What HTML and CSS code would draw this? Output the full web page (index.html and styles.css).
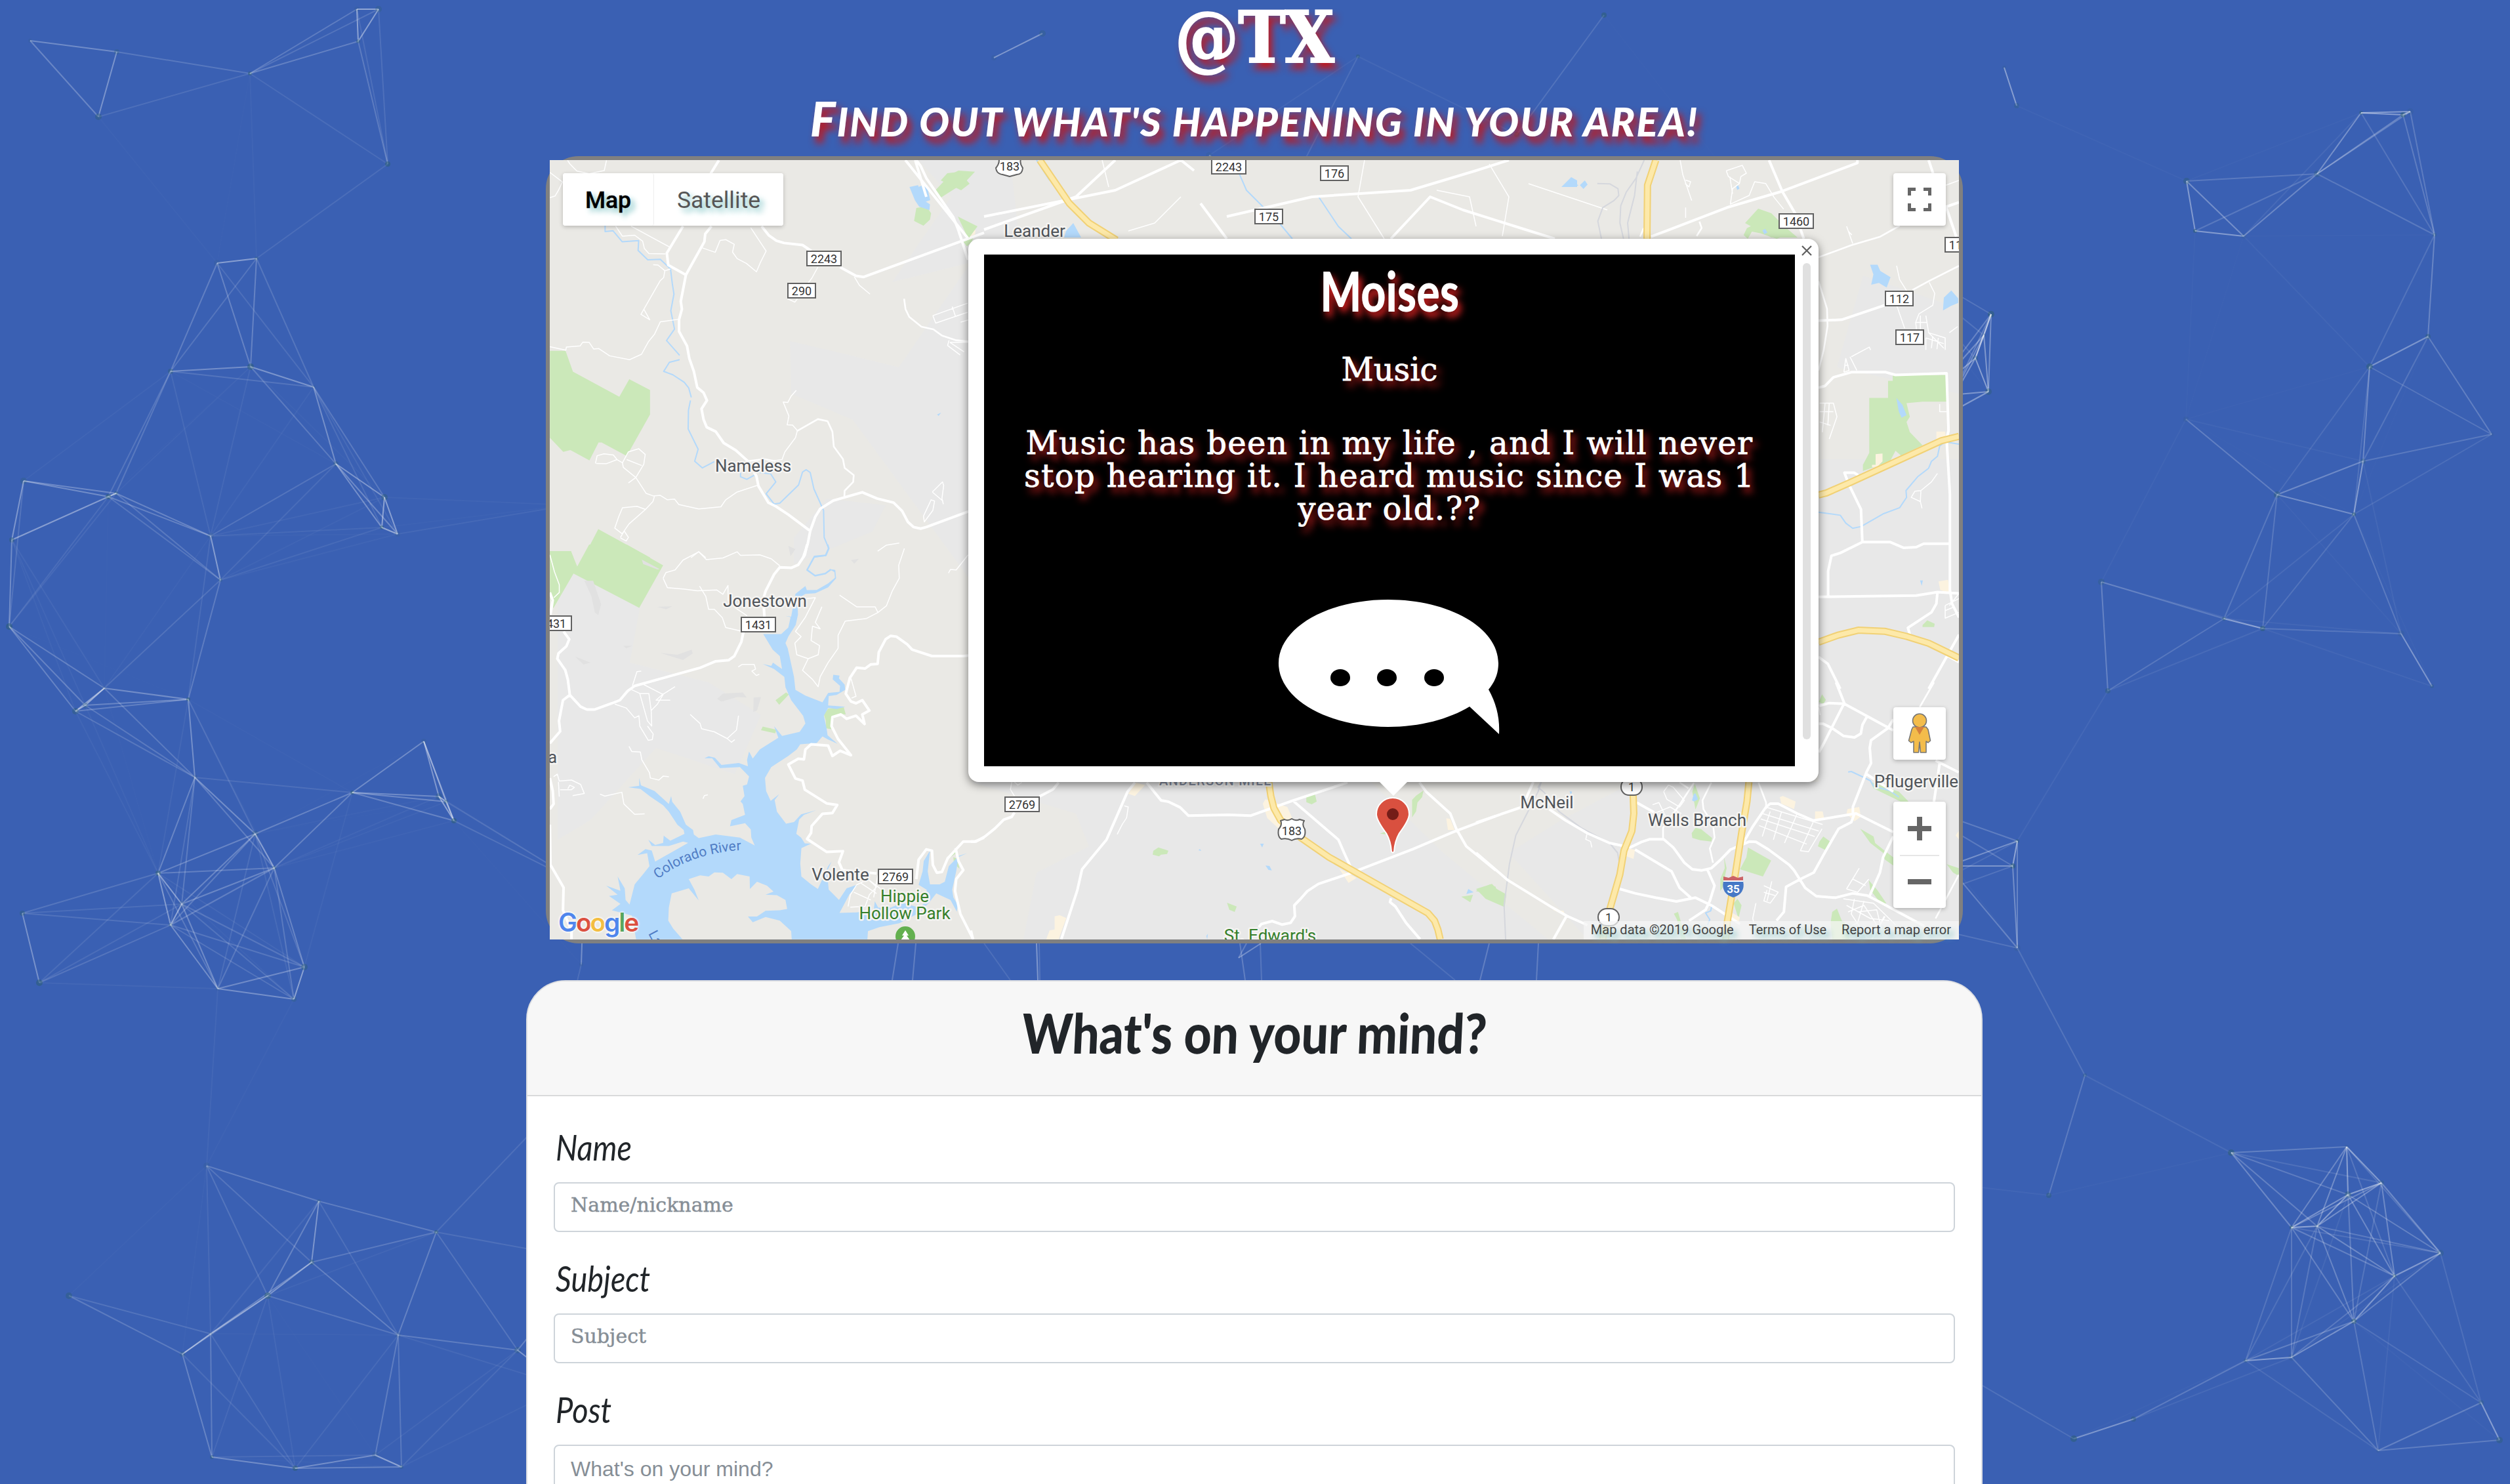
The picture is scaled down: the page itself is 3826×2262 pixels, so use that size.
FILE: index.html
```html
<!DOCTYPE html>
<html lang="en">
<head>
<meta charset="utf-8">
<title>@TX</title>
<link rel="stylesheet" href="styles.css">
</head>
<body>
<svg class="particles" id="particles" width="3826" height="2262" aria-hidden="true"></svg>
<main class="page">
  <header class="hero">
    <h1 class="brand">@TX</h1>
    <p class="tagline"><span class="tagline-text">Find out what's happening in your area!</span></p>
  </header>

  <section class="map">
    <svg class="map-tiles" viewBox="838 244 2148 1188" width="2148" height="1188">
      <rect class="land" x="838" y="244" width="2148" height="1188"/>
      <path class="urban" d="M1400 244H1540L1560 420V900L1476 880 1300 640 1206 600 1204 520 1290 540 1370 560 1480 400 1360 430 1450 300Z M1480 1192H2090L2200 1300 2360 1432H1560L1580 1330 1660 1290 1640 1240Z M2490 1192H2986V1432H2420L2300 1300 2380 1250Z M2772 700H2986V1192H2772Z M2840 420L2986 470V600L2800 560Z"/>
      <path class="urban" d="M1210 820L1260 760 1350 770 1330 810 1210 860Z M900 870L980 900 960 1010 1080 1040 1160 1090 1120 1180 1000 1140 900 1250 850 1280V880Z M1000 640H1010Z"/>
      <!-- north-west quarter -->
      <g transform="translate(820 230) scale(.43367 .39541)">
        <path class="park" d="M42 771H97L123 851 286 948 321 880 394 922V1016L312 1176 224 1124H213L181 1193 114 1153 89 1160 42 1106Z M212 1458L160 1568H395Z M42 1543H116L125 1568H42Z M1397 152L1448 92 1478 76 1536 80 1502 120 1416 180Z M1330 220L1365 214 1382 240 1378 265 1355 288 1322 270Z M1495 350L1530 335 1525 350 1508 368Z"/>
        <path class="shop" d="M1508 318L1517 296 1538 306 1536 322 1518 332Z"/>
        <path class="lake" d="M1306 139L1336 132 1356 190 1378 206 1376 228 1340 215 1325 190Z M1403 1016L1417 1009 1408 1022Z"/>
        <path class="stream" d="M236 288V311L264 308 296 350 354 346 352 384 386 420 430 418 466 455 472 510 478 552 467 616 480 687 452 731 498 788M498 805L462 815 442 850 474 863 514 892 530 914 539 950M536 962L529 1000 528 1072 563 1150 551 1196 578 1222 620 1198M712 1240V1256L734 1266 760 1250M780 1240L818 1245 836 1276 802 1322 830 1361 850 1358 916 1288 930 1238 943 1229 957 1240 970 1303 1004 1386 1006 1490 1022 1532 1010 1560 970 1566"/>
        <path class="lane" d="M104 36L112 50 137 78 180 88 233 76 241 36M42 83L86 120 72 152 60 174 42 180M273 290L297 329 340 325 368 348 374 376 390 396 448 397M327 290L462 370M578 374L623 391 640 345 660 342 690 360 684 390 700 415 733 434 768 466 782 430 802 386 748 296M405 439L422 440 446 462 442 488 430 500 362 630 393 651 372 610M466 455L446 462M495 649L430 659 410 706 388 736 364 784 322 805 252 790 214 762 196 764 180 738 158 737 148 752 100 756 98 768 42 755M42 1604M984 448L963 490 932 535M877 570L903 583 912 570M1112 485L1130 518 1167 552M908 923L890 945 878 970 862 968 882 1022 876 1056 895 1057 912 1078 905 1106 868 1160 858 1190 830 1194M202 1205L208 1175 232 1168 265 1172 278 1190 240 1206 205 1205M278 1190L297 1202 318 1160 354 1148 377 1170 372 1208 344 1259 318 1280M312 1190L365 1213M297 1202L300 1220 344 1259 380 1320 405 1330 430 1328 455 1345 480 1342 495 1363 565 1380 643 1372 660 1345 700 1315 770 1290M410 1330L404 1352 378 1382 348 1370 297 1376 284 1410 270 1454 296 1476 320 1438 378 1382M290 1490L303 1465 318 1490 310 1504 290 1492M1388 635L1510 587M1388 635L1398 664 1510 622M1456 600L1467 636M1486 660L1512 652M1445 730L1440 750 1484 787M1448 738L1498 775M1448 738H1512M1386 1315L1422 1276 1426 1290 1420 1340 1425 1362M1386 1315L1424 1350M1355 1408L1382 1345 1394 1350 1388 1386 1358 1430 1355 1408M1194 1543L1224 1520 1270 1512M538 1568L565 1545 590 1568"/>
        <path class="road" d="M1287 570L1292 610 1305 640 1348 678 1390 688 1420 712 1470 730 1512 734M910 1080L984 1034 1018 1042 1035 1082 1040 1140 1072 1188 1078 1222 1110 1250 1108 1276 1078 1310 1077 1332M740 1196L795 1188 835 1196"/>
        <path class="street" d="M636 36L607 88M510 290L453 394 458 440 520 478M610 290L588 320 585 350 520 478 502 580 506 610 496 650V696L524 752 532 800 548 850 560 912 582 932 594 962 575 994 582 1035 593 1065 625 1082 653 1126 695 1154 736 1194 768 1254 775 1292 810 1356 836 1370 880 1402 957 1465 948 1516 932 1568M957 1465L975 1410 992 1380 1038 1348 1140 1316 1192 1340 1250 1356 1280 1388 1300 1430 1320 1450 1345 1456 1365 1450 1513 1390M786 290L812 326 838 346 865 355 930 363 960 385M1062 448L1118 482 1145 486 1568 316M1330 36L1345 58 1365 105 1460 256 1476 300 1512 420"/>
      </g>
      <!-- south-west quarter: Lake Travis -->
      <g transform="translate(820 830) scale(.43367 .39541)">
        <path class="park" d="M180 0H312L440 80 356 244 125 112 54 246 42 200V25H116L138 85Z M835 600L872 570 882 578 848 618Z M784 716L790 702 838 714 834 728Z M1005 655L1020 632 1075 628 1082 655 1060 652 1040 665 1030 712 1012 708V680Z M1442 1200L1468 1175 1470 1190 1446 1208Z M1460 1205L1472 1210 1482 1250 1462 1230Z"/>
        <path class="shade" d="M365 58L428 95 420 96 370 75Z M163 140H194L222 230 212 272 200 262 188 200Z M430 418L490 425 540 405 544 420 510 445Z M630 595L650 575 720 570 734 590 700 588 645 606Z M758 590L784 588 770 640 757 645Z M420 240L472 238 450 250Z M300 390L332 390 310 400Z M130 432L185 455 160 462Z M880 5L905 18 888 45Z M1100 60L1128 55 1112 74Z"/>
        <path class="lake" d="M905 190L940 160 945 176 980 175 1020 150 1044 128 1042 106 1024 95 1045 98 1048 130 1020 165 975 188 940 190 912 210 914 270 906 310 880 355 870 380 878 400 886 440 900 510 905 560 940 582 1000 608 1020 572 1060 568 1062 545 1036 520 1038 502 1060 505 1058 516 1078 540 1080 560 1050 580 1022 584 1020 620 1080 625 1050 634 1020 630 1005 660 1015 712 1018 735 1053 768 1020 752 1000 740 980 765 922 770 910 790 880 815 820 858 798 900 802 950 818 988 848 962 832 985 840 1030 872 1076 900 1070 925 1040 978 1024 935 1042 918 1060 908 1115 925 1130 938 1152 960 1153 926 1170 922 1230 926 1280 960 1310 984 1328 1020 1240 1032 1222 1016 1260 1022 1330 1058 1370 1085 1325 1125 1310 1095 1348 1060 1420 1120 1418 1180 1410 1184 1375 1196 1400 1240 1400 1280 1380 1340 1400 1370 1370 1366 1330 1338 1312 1352 1260 1356 1220 1378 1180 1370 1260 1378 1310 1412 1310 1430 1300 1444 1240 1480 1200 1508 1190 1478 1205 1470 1260 1456 1330 1460 1360 1476 1390 1472 1415 1450 1370 1400 1345 1375 1380 1340 1420 1270 1460 1200 1475 1160 1490 1158 1522H892L890 1490 850 1450 800 1436 755 1456 738 1434 770 1434 800 1412 850 1410 876 1405 870 1370 840 1352 800 1350 828 1338 805 1315 770 1300 745 1328 744 1280 700 1270 680 1290 650 1265 620 1264 600 1280 570 1275 530 1290 550 1330 565 1372 530 1325 470 1345 460 1400 458 1450 475 1480 508 1522H345L330 1430 260 1410 290 1385 250 1355 280 1350 240 1315 290 1335 280 1280 305 1325 308 1370 322 1388 340 1310 370 1270 392 1240 384 1190 350 1197 378 1174 400 1180 412 1222 528 1150 510 1145 460 1162 400 1162 388 1138 412 1158 440 1150 442 1122 465 1142 515 1115 512 1100 490 1080 460 1030 440 1005 395 972 360 942 318 936 356 930V900L362 928 410 950 460 1000 468 970 472 992 500 1030 520 1080 545 1100 548 1118 565 1132 625 1118 710 1130 762 1160 750 1130 748 1098 728 1074 675 1086 680 1062 728 1042 720 1000 712 990 726 970 720 930 735 925 742 894 710 858 640 862 612 824 585 824 600 816 622 822 645 850 706 842 738 855 735 830 742 798 755 825 780 790 845 745 830 700 858 738 920 722 940 690 932 660 890 600 870 550 866 510 830 480 790 460 820 468 826 455 858 480 850 430 825 405 792 345 855 345 880 320 888 280 870 275 890 278Z"/>
        <path class="river" d="M1018 0L1022 15 1012 42 972 46 946 98 974 120 1010 112 1030 96"/>
        <path class="lane" d="M42 40L58 105 75 155V185L56 205M440 130L450 108 482 98 510 60 565 28 592 58 650 52 700 28 712 42 780 40 820 55 850 82M440 130L455 166 515 172 560 178 628 175 650 192 668 158V215L695 245 735 275M568 160L590 200 600 250 620 250 648 282 660 320 720 335M1060 195L1120 240 1185 240 1195 262 1225 236 1245 180 1270 130 1268 80 1288 15M1195 262L1155 285 1080 295 1055 350V400L1020 455 992 510 985 548 965 520 930 485 950 440 985 425 990 390 960 370 965 315 992 325 975 300 998 240M950 440L910 425 903 380 925 355 905 335 940 280 975 205 928 210M363 488L348 490 332 545M330 560L360 575H390L398 640 400 700 385 680 358 575M372 540L440 578 420 615 398 640M482 548L438 578 415 600 465 600M270 615L310 630 340 668 355 660 358 700 388 755 402 752 405 730 385 700M535 655L570 690 575 710 620 722 665 748 698 715 705 660M665 748L680 762 692 752M704 472L718 462H760L765 480 752 488 768 505 778 500M320 778L330 798 360 800 365 830 392 880 395 900 425 908 440 893 460 895M55 895L68 885 75 912 118 908 150 925 163 960 122 968M75 972L72 915M78 945L118 945 128 936 112 928 105 942M218 962L235 970 295 955 302 1000 340 1040 375 1038M580 980L585 968 597 965M1443 110L1450 96 1470 98 1512 40M1100 515L1118 585 1102 592M1090 1395L1098 1350 1120 1312 1160 1290 1190 1320 1165 1350 1150 1395 1098 1398M1110 1340L1170 1370M1135 1305L1190 1345M1160 1290L1220 1340M1195 1275L1180 1360"/>
        <path class="street" d="M946 0L938 40 915 78 890 90 850 88 830 115 800 180 792 210 796 278M722 338L715 375 690 430 670 446 625 450 570 475 340 545 315 565 288 600 260 612 200 636 172 636 150 625 112 580 105 520 96 484 68 440 72 420 100 392 110 365 90 335M42 185L52 215 44 270M112 580L88 600 74 680 78 720 42 766M42 900L52 950 55 1000 42 1020M42 1080L44 1235 90 1322 88 1410 118 1490V1522M1513 428L1495 430H1385L1315 405 1298 385 1260 355 1240 352 1222 365 1198 415 1194 460 1170 462 1150 478 1120 475 1096 515 1082 575 1100 605 1118 612 1140 600 1165 640 1140 655 1148 692 1118 660 1085 672 1065 655 1035 665 1032 700 1055 750 1100 812 1062 795 1035 815 1020 775 960 770 940 790 935 828 915 826 880 848 905 902 930 910 938 945 1015 998 1052 1004 1035 1035 1000 1038 962 1085 960 1112 946 1135 1015 1185 1072 1182 1058 1225 1070 1255 1190 1268M1330 1290L1338 1215 1365 1175 1385 1180 1388 1235 1402 1265 1420 1262 1440 1210 1495 1145 1535 1145 1568 1130M1468 1170L1478 1220 1495 1255 1470 1290 1466 1335 1485 1425 1530 1522"/>
      </g>
      <!-- northern strip above the popup -->
      <path class="park" d="M1434 275L1444 264 1462 262 1478 280 1465 290Z M2660 340L2680 318 2700 325 2720 345 2740 362H2700Z M1460 330L1490 345 1476 364Z"/>
      <path class="lake" d="M1400 285L1412 280 1418 305 1404 310Z M1625 352L1636 340 1648 362H1622Z M2380 285L2395 270 2404 275V285Z"/>
      <path class="stream" d="M1880 244L1900 290 1950 340 1970 364M2010 300L2040 345 2060 364M1580 244L1600 275"/>
      <path class="lane" d="M1680 244L1690 285M2080 244L2070 300 2110 364M2330 280L2450 320M1800 300L1760 340 1720 352M2270 250L2300 300 2290 360M2190 290L2240 300 2250 345"/>
      <path class="street" d="M1395 244L1412 300M1800 244L1820 260M1500 330L1700 290 1800 244M1500 350L1640 300 1700 244M1830 310L1870 364M1870 330L2000 300 2150 290 2250 260 2300 244M2120 364L2180 300 2230 320 2370 364M1380 244L1476 364"/>
      <path class="hwy-edge" d="M1585 244L1630 310 1660 340 1702 366"/><path class="hwy" d="M1585 244L1630 310 1660 340 1702 366"/>
      <!-- south, below the popup -->
      <g transform="translate(1480 1160) scale(.5102 .33333)">
        <path class="park" d="M545 410L560 395 590 410 586 425 568 428 562 436 543 428Z M765 648L794 665 788 690 772 680Z M1002 165L1028 153 1033 185 1018 198 1002 188Z M1318 178L1330 158 1352 135 1348 165 1334 190 1330 230 1318 258Z M1222 332L1240 322 1238 335Z M1465 620L1500 612 1492 646Z M1508 595L1550 565 1568 575V648L1540 605Z"/>
        <path class="shop" d="M470 150L492 98 520 110 490 160Z M872 195L880 175 945 210 960 260 920 310 885 260Z M1100 492L1130 515 1152 535 1128 557Z M1420 262L1432 265 1445 315 1425 315Z M225 815L235 775 250 770V710L265 705 285 718 262 815Z"/>
        <path class="lake" d="M864 378L875 378 870 395Z M880 478L892 480 899 500 889 498Z M1480 608L1486 585 1502 600Z M680 408L684 402 688 411Z M703 800L708 790 706 815Z"/>
        <path class="lane" d="M122 96L118 130 130 160M458 205L470 210 465 260 452 290 437 335M130 96L140 110 152 98"/>
        <path class="street" d="M262 98L245 130 205 162M130 235L122 255 98 268 72 308 42 345 15 368H0M490 98L468 140 405 360 332 495 318 590 270 815M525 98L568 180 590 186 625 212 650 250 770 246 835 250 960 182 1125 98M965 185L1098 360 1115 420 1136 490M860 760L868 745 900 732 930 748 955 740 968 710 966 660 985 630 1005 595 1038 562 1130 515 1320 403 1445 322 1568 252M1340 98L1360 140 1432 240 1450 310 1480 390 1568 500M1255 628L1252 645 1268 665 1300 740 1342 815M0 775L6 815"/>
        <path class="hwy-edge" d="M890 98L896 160 905 215 925 270 985 350 1070 440 1365 695 1385 730 1395 770 1402 815"/><path class="hwy" d="M890 98L896 160 905 215 925 270 985 350 1070 440 1365 695 1385 730 1395 770 1402 815"/>
      </g>
      <!-- south-east quarter -->
      <g transform="translate(2250 1040) scale(.48469 .33333)">
        <path class="park" d="M0 945L50 922 65 945 95 970 90 1028 30 990Z M680 500L688 465 704 530 690 582Z M678 690L690 665 708 672 742 712 740 728 705 722 680 712Z M855 755L928 815 902 888 830 855 850 800Z M1080 728L1092 705 1115 730 1100 768 1075 750Z M1088 55L1100 80 1092 100 1078 90Z M1208 670L1250 705 1255 735 1285 770 1312 800V838L1285 810 1280 780 1240 735Z M780 800L788 850 775 940 768 955V900L782 850Z M1235 905L1262 950 1290 1010 1275 1015 1240 950Z M1120 1050L1135 1035 1150 1090 1160 1100 1175 1176H1120L1115 1100Z M622 1058L635 1050 645 1100 660 1176H645L632 1085Z M1240 455L1290 480 1330 500 1360 545H1335L1250 485Z M810 1010L822 990 835 1020 825 1080Z M1480 832L1518 850V885L1500 870Z"/>
        <path class="shop" d="M955 525L965 520 1005 545 1000 580 960 555Z M1066 590L1090 590 1095 625 1066 628Z M1168 580L1205 570 1210 615 1190 635 1165 600Z M475 760L500 765 495 808 472 795Z M800 1050L830 1075 825 1100 805 1090Z M240 1040L275 1045 280 1065Z M1518 680L1508 700 1518 718Z"/>
        <path class="lake" d="M685 510L690 508 698 535 686 545 679 540Z M294 498L302 500 298 515Z"/>
        <path class="stream" d="M1170 410L1180 408 1215 432 1240 450 1250 475 1300 495 1330 525M742 1015L738 1045 722 1055 735 1085 728 1110"/>
        <path class="rail" d="M205 456L195 480 215 505 260 590 330 665 420 735 445 780 450 820M205 456L195 500 160 600 125 700 105 830 88 1020 93 1176"/>
        <path class="lane" d="M350 685L345 718 360 728 364 755M590 500L605 470 620 480 655 540 640 570 600 535 590 500M555 560L575 550 600 625M560 600L610 570 645 600M925 590L900 705M910 570L1090 650M900 600L1078 680M895 625L1065 705M890 655L1040 740M960 595L935 720M1010 600L970 735M1060 640L1020 770 1045 775 1088 670M905 930L950 960 925 1010 905 1000 915 950M930 910L915 1000M905 960L940 975M1165 945L1205 850M1165 945L1200 960 1235 900M1185 900L1225 930M1155 990L1250 1010 1320 1110M1165 1020L1240 1080 1300 1090M1170 1050L1220 1020 1260 1110 1200 1170M1190 990L1180 1060 1230 1170M1200 1050L1260 1040 1280 1160M1220 1000L1200 1100 1160 1130M880 1010L870 1080 875 1110M1078 115L1082 150"/>
        <path class="road" d="M685 460L640 560 588 665V715M740 458L712 540 715 580 745 650 750 710 735 760 745 825M640 458L668 485M888 458L912 550V580M1440 0L1395 114M1285 1070L1245 1176M1518 880L1445 1080"/>
        <path class="street" d="M180 456L145 570 0 642M230 580L280 630 350 690 420 735 485 755 520 730 545 718H590L620 755 655 825 680 855 710 860 740 850 770 810 800 765 860 728 880 730 920 765 985 835 1000 860 1035 940 1070 978 1130 985 1185 965 1230 975 1270 1005 1410 1115M505 550L560 595M500 765L615 865 640 940 675 985M0 780L100 905 240 1030 285 1068 350 1110M285 1068L243 1176M452 945L500 965 565 985 630 1002 690 985 740 1020 830 1105M728 858L750 930 735 1000 722 1040 670 1090M830 760L870 660 912 570 925 555 950 555 1010 600 1060 632 1195 600 1312 685M1190 600L1180 640 1140 670 1100 770 1062 870 1020 900 975 935 968 1050 945 1090M1132 0L1158 95 1095 275 1078 320M1078 108L1110 95 1158 98 1312 220M1078 190H1092L1120 210 1155 245 1190 252 1210 235 1215 195 1230 155M1312 170L1295 210 1242 265 1238 300 1242 370 1228 410 1185 570V600M1445 358L1518 412M1458 370L1440 546M1312 705L1280 800 1270 870 1238 975M1228 420L1312 500"/>
        <path class="hwy-edge" d="M494 515L496 600 490 680 465 770 452 880 420 1040 398 1176M858 456L852 545 835 690 815 880 790 1095 785 1176"/><path class="hwy" d="M494 515L496 600 490 680 465 770 452 880 420 1040 398 1176M858 456L852 545 835 690 815 880 790 1095 785 1176"/>
      </g>
      <!-- north-east quarter -->
      <g transform="translate(2380 230) scale(.42092 .52296)">
        <path class="park" d="M1200 654L1395 653V731H1308L1250 735 1262 775 1250 790 1262 820 1308 858 1230 888 1210 874 1190 905 1120 925 1092 933V915L1115 880V720H1183V670H1200Z M1308 1382L1325 1368 1352 1378 1350 1388H1308Z M660 245L672 225 705 212 720 200 735 215 775 245 800 250 780 256 720 240 690 235 675 256Z"/>
        <path class="shop" d="M1138 884L1163 882V905L1145 920 1125 922V915H1138Z M1358 818H1390L1393 840 1358 842Z M1366 1255L1400 1250 1410 1290 1372 1280Z"/>
        <path class="lake" d="M1118 332H1145L1155 350 1192 368 1178 398 1150 385 1122 390 1130 360Z M1382 465L1385 428 1412 407 1437 430V443L1410 452Z M1213 720L1235 740 1250 770 1232 778 1222 760Z M67 100L85 86 95 98 80 111Z M32 95L45 93 62 100 50 105 35 103Z M728 232L738 227 746 238 735 243Z M1299 1252H1309L1305 1268Z M633 104L640 100 645 110 637 114Z"/>
        <path class="stream" d="M931 1053L1010 1062 1030 1085 1055 1100 1085 1095 1165 1058 1225 1040 1250 1010 1248 990 1290 950 1330 925 1340 905 1362 890 1370 860 1390 848 1440 855"/>
        <path class="rail" d="M300 27L270 80 235 120 215 160 212 210 225 256M275 60L265 130 240 210 245 256M130 95L175 96 205 110 208 130 190 145 150 165 132 205 145 256"/>
        <path class="lane" d="M430 27L440 70 472 145M450 85L468 90 462 105 448 95M450 165V195M597 58L655 42 670 65 650 75 645 95 620 110 612 155 680 130 700 90 740 95 770 135 805 170M597 58L605 75 645 95M610 75L620 125M1033 220L1055 270M1040 235L1052 245M1214 335L1225 375 1252 410M1332 383L1352 415 1345 450 1295 475 1283 500 1290 545M1214 450L1243 517M1320 480L1330 530 1390 545 1390 580M1300 480V530M1285 500H1325M1320 545L1320 580M1320 545L1385 562M1330 530L1385 575M1345 540L1340 575M1365 545L1360 578M1050 600L1115 572 1120 580M1045 600L1070 640M1023 645L1030 605 1042 640 1023 645M1025 625H1040M935 735H985L998 775 970 840M935 760L985 760M935 790L975 800M955 735L945 820M970 735L965 800M1362 940L1340 965 1302 990 1280 992 1267 1010 1300 1022 1302 990M1300 1022L1306 1042M1370 738V760H1395M1390 1325L1440 1305M1390 1325V1362L1440 1345M1390 1340L1420 1330M1440 1290L1405 1325M1405 530L1435 512M1393 100L1440 86"/>
        <path class="road" d="M500 206L508 225 490 248M931 380L962 460 964 510 950 580 931 640M1272 405L1330 380 1440 335M931 310L1050 275 1155 250 1225 218M285 250L298 225"/>
        <path class="street" d="M325 250L600 165 798 118 1072 35V27M752 27L800 118 845 180 878 256M931 495L1015 492 1170 450M1330 27L1350 75M1393 163L1440 150M1393 163L1430 250M931 690L955 685 985 660 1050 645H1175L1210 653 1395 648 1402 815 1395 840 1407 1000V1280L1415 1320 1440 1360M1075 945L1060 938H1025L1040 970 1085 1045 1090 1140M966 1300V1225L978 1180 1010 1172 1090 1140H1190L1240 1157 1285 1155 1312 1145H1407M931 1300L1285 1296 1362 1286 1440 1290M1362 1286L1358 1320 1340 1345 1255 1390 1262 1410M1440 1410L1330 1568M931 1475L965 1495 1010 1568M1395 1470L1440 1490"/>
        <path class="hwy-edge" d="M342 27L312 100 310 256M931 1003L960 997 1050 965 1375 845 1440 832M931 1432L1000 1412 1075 1397 1170 1400 1250 1415 1330 1435 1440 1478"/><path class="hwy" d="M342 27L312 100 310 256M931 1003L960 997 1050 965 1375 845 1440 832M931 1432L1000 1412 1075 1397 1170 1400 1250 1415 1330 1435 1440 1478"/>
      </g>
      <!-- road shields -->
      <g class="shield">
        <rect x="1230" y="383" width="52" height="22"/><text x="1256" y="401">2243</text>
        <rect x="1201" y="432" width="42" height="22"/><text x="1222" y="450">290</text>
        <rect x="817" y="939" width="54" height="22"/><text x="843" y="957">1431</text>
        <rect x="1130" y="941" width="52" height="22"/><text x="1156" y="959">1431</text>
        <rect x="1339" y="1325" width="52" height="22"/><text x="1365" y="1343">2769</text>
        <rect x="1532" y="1215" width="52" height="22"/><text x="1558" y="1233">2769</text>
        <rect x="1847" y="243" width="52" height="22"/><text x="1873" y="261">2243</text>
        <rect x="2013" y="253" width="42" height="22"/><text x="2034" y="271">176</text>
        <rect x="1913" y="319" width="42" height="22"/><text x="1934" y="337">175</text>
        <rect x="2712" y="326" width="52" height="22"/><text x="2738" y="344">1460</text>
        <rect x="2965" y="362" width="42" height="22"/><text x="2986" y="380">118</text>
        <rect x="2874" y="444" width="42" height="22"/><text x="2895" y="462">112</text>
        <rect x="2890" y="503" width="42" height="22"/><text x="2911" y="521">117</text>
        <rect x="2471" y="1187" width="32" height="25" rx="12"/><text x="2487" y="1206">1</text>
        <rect x="2436" y="1385" width="32" height="26" rx="13"/><text x="2452" y="1405">1</text>
        <path d="M1952 1251L1958 1249Q1963 1252 1969 1248 1975 1252 1981 1249L1988 1251Q1984 1257 1989 1264 1991 1275 1984 1279 1976 1277 1969 1281 1962 1277 1953 1279 1947 1275 1949 1264 1955 1257 1952 1251Z"/><text x="1969" y="1273">183</text>
        <path d="M1522 240L1526 238H1552L1557 240Q1553 248 1559 256 1558 266 1550 266L1539 269 1528 266Q1519 265 1518 256 1525 248 1522 240Z"/><text x="1539" y="260">183</text>
      </g>
      <path fill="#4678c6" d="M2627 1343H2657Q2661 1362 2642 1368 2623 1362 2627 1343Z"/><path fill="#cb6266" d="M2627 1343V1336L2635 1338 2642 1335 2649 1338 2657 1336V1343Z"/><path stroke="#fff" stroke-width="2" d="M2627 1343H2657"/><text class="interstate" x="2642" y="1361">35</text>
      <!-- place names -->
      <g class="place">
        <text x="1577" y="361">Leander</text><text x="1148" y="719">Nameless</text><text x="1166" y="925">Jonestown</text>
        <text x="1281" y="1342">Volente</text><text x="2358" y="1232">McNeil</text><text x="2587" y="1259">Wells Branch</text><text x="2921" y="1200">Pflugerville</text><text x="842" y="1163">a</text>
      </g>
      <g class="place place-park"><text x="1379" y="1375">Hippie</text><text x="1379" y="1401">Hollow Park</text><text x="1936" y="1435">St. Edward's</text></g>
      <text class="district" x="1852" y="1197" textLength="170">ANDERSON MILL</text>
      <circle cx="1380" cy="1427" r="15" fill="#63b04f"/><path fill="#fff" d="M1380 1418L1385 1426H1382L1387 1433H1373L1378 1426H1375Z"/>
      <path id="river-curve" fill="none" d="M1003 1340Q1050 1302 1126 1296L1150 1295"/>
      <text class="water-name"><textPath href="#river-curve">Colorado River</textPath></text>
      <text class="water-name" transform="translate(988 1423) rotate(62)">Lake Travis</text>
      <!-- marker -->
      <path fill="#d9503f" stroke="#fff" stroke-width="2" d="M2121 1298Q2120 1282 2113 1270 2098 1250 2098 1241A25 25 0 0 1 2148 1241Q2148 1250 2133 1270 2126 1282 2125 1298Q2123 1301 2121 1298Z"/><circle cx="2123" cy="1241" r="9" fill="#741d18"/>
    </svg>

    <div class="map-type"><button class="map-type-btn is-active">Map</button><button class="map-type-btn">Satellite</button></div>
    <button class="ctrl ctrl-full" aria-label="Fullscreen"><svg viewBox="0 0 36 36" width="36" height="36"><path fill="#666" d="M0 0H12V5H5V12H0ZM24 0H36V12H31V5H24ZM0 24H5V31H12V36H0ZM31 24H36V36H24V31H31Z"/></svg></button>
    <button class="ctrl ctrl-pegman" aria-label="Street View"><svg viewBox="0 0 36 62" width="36" height="62"><g fill="#f3bc4b" stroke="#777" stroke-width="1.6" stroke-linejoin="round"><path d="M8 21H28L31 25 34.500 42 31 45 28 43V60H19.500L18 44 16.500 60H9V43L5 45 1.500 42 6 25Z"/><circle cx="18" cy="11.500" r="10.500"/></g><path fill="#d5803d" d="M11 21H25L18 33Z"/></svg></button>
    <div class="ctrl-zoom"><button class="zoom-btn" aria-label="Zoom in"><svg viewBox="0 0 36 36" width="36" height="36"><path fill="#666" d="M14 0H22V14H36V22H22V36H14V22H0V14H14Z"/></svg></button><button class="zoom-btn" aria-label="Zoom out"><svg viewBox="0 0 36 36" width="36" height="36"><path fill="#666" d="M0 14H36V22H0Z"/></svg></button></div>
    <div class="logo"><span class="b">G</span><span class="r">o</span><span class="y">o</span><span class="b">g</span><span class="g">l</span><span class="r">e</span></div>
    <div class="legal"><span>Map data ©2019 Google</span><span>Terms of Use</span><span>Report a map error</span></div>

    <article class="popup">
      <div class="popup-body">
        <h2 class="popup-name">Moises</h2>
        <p class="popup-subject">Music</p>
        <p class="popup-text"><span>Music has been in my life , and I will never</span><span>stop hearing it. I heard music since I was 1</span><span>year old.??</span></p>
        <svg class="bubble" viewBox="1949 912 340 208" width="340" height="208"><path fill="#fff" d="M2117 913C2210 913 2285 956 2285 1010 2285 1025 2280 1038 2270 1050Q2288 1082 2286 1118L2241 1076C2210 1095 2165 1107 2117 1107 2024 1107 1950 1064 1950 1010S2024 913 2117 913Z"/><ellipse cx="2044" cy="1032" rx="15" ry="13"/><ellipse cx="2115" cy="1032" rx="15" ry="13"/><ellipse cx="2187" cy="1032" rx="15" ry="13"/></svg>
      </div>
      <div class="popup-side"><svg viewBox="0 0 16 16" width="16" height="16"><path stroke="#5f5f5f" stroke-width="2.200" d="M1 1L15 15M15 1L1 15"/></svg><div class="scrollbar"></div></div>
    </article>
  </section>

  <section class="card">
    <h2 class="card-title"><span>What's on your mind?</span></h2>
    <form class="card-body">
      <label class="label" for="name"><span>Name</span></label>
      <input class="field" id="name" placeholder="Name/nickname">
      <label class="label" for="subject"><span>Subject</span></label>
      <input class="field" id="subject" placeholder="Subject">
      <label class="label" for="post"><span>Post</span></label>
      <textarea class="field field-post" id="post" placeholder="What's on your mind?"></textarea>
    </form>
  </section>
</main>
<script src="particles.js"></script>
</body>
</html>
```
FILE: styles.css
```css
* { box-sizing: border-box; }
body { margin: 0; width: 3826px; height: 2262px; overflow: hidden; background: #3a60b3; color: #212529; font-family: Roboto, sans-serif; }
h1, h2, p { margin: 0; font-weight: inherit; }
button { border: 0; background: #fff; padding: 0; font: inherit; }
.particles { position: absolute; left: 0; top: 0; }
.page { position: relative; height: 2262px; overflow: hidden; padding-right: 2px; display: flex; flex-direction: column; align-items: center; }

.hero { flex: none; height: 238px; display: flex; flex-direction: column; align-items: center; color: #fff; text-shadow: 6px 10px 12px #c81414; }
.brand { height: 128px; font: 700 108px/114px "DejaVu Serif Condensed", "DejaVu Serif", serif; letter-spacing: -1px; -webkit-text-stroke: 2px #fff; }
.tagline { height: 110px; font: italic 900 61px/104px Lato, sans-serif; letter-spacing: 1.9px; text-transform: uppercase; white-space: nowrap; }
.tagline-text { display: inline-block; }
.tagline-text::first-letter { font-size: 73px; }

.map { flex: none; position: relative; width: 2160px; height: 1200px; border: 6px solid gray; border-radius: 50px; }
.map-tiles { display: block; }
.map-tiles path { stroke-linejoin: round; }
.map-tiles g path { vector-effect: non-scaling-stroke; }
.land { fill: #eae9e5; }
.urban { fill: #e8e8e8; }
.shade { fill: #e1e1e1; }
.park { fill: #cbe8b9; }
.shop { fill: #fcf3e0; }
.lake { fill: #b3d9fb; }
.stream, .river, .lane, .road, .street, .rail, .hwy, .hwy-edge { fill: none; }
.stream { stroke: #b3d9fb; stroke-width: 2; }
.river { stroke: #b3d9fb; stroke-width: 2.5; }
.rail { stroke: #d5d7dd; stroke-width: 2; }
.lane { stroke: #fff; stroke-width: 1.5; }
.road { stroke: #fff; stroke-width: 2.6; }
.street { stroke: #fff; stroke-width: 4; }
.hwy { stroke: #fde9a9; stroke-width: 7; }
.hwy-edge { stroke: #f1d175; stroke-width: 11; }
.shield rect, .shield path { fill: #fff; stroke: #616161; stroke-width: 2; }
.shield text { font: 18px Roboto, sans-serif; fill: #333; text-anchor: middle; }
.interstate { font: 700 17px Roboto, sans-serif; fill: #fff; text-anchor: middle; }
.place text { font: 26px Roboto, sans-serif; fill: #50545a; stroke: #f5f4f2; stroke-width: 5; stroke-linejoin: round; paint-order: stroke; text-anchor: middle; }
.place-park text { fill: #36802c; }
.district { font: 500 20px Roboto, sans-serif; fill: #858da0; stroke: #f5f4f2; stroke-width: 4; paint-order: stroke; text-anchor: middle; }
.water-name { font: 21px Roboto, sans-serif; fill: #4f7cc4; }

.map-type { position: absolute; left: 20px; top: 20px; display: flex; height: 80px; border-radius: 4px; background: #fff; box-shadow: 0 2px 6px rgba(0, 0, 0, .22); }
.map-type-btn { width: 197px; padding-top: 2px; border-radius: 4px; color: #565656; font-size: 35.500px; text-shadow: 6px 6px 8px #7ec3c4; }
.map-type-btn.is-active { width: 139px; color: #000; font-weight: 500; border-right: 1px solid #eee; -webkit-text-stroke: .4px #000; }
.ctrl, .ctrl-zoom { position: absolute; right: 20px; width: 80px; height: 80px; border-radius: 4px; background: #fff; box-shadow: 0 2px 6px rgba(0, 0, 0, .25); display: flex; align-items: center; justify-content: center; }
.ctrl-full { top: 20px; }
.ctrl-pegman { top: 834px; }
.ctrl-zoom { top: 978px; height: 162px; flex-direction: column; }
.zoom-btn { width: 60px; height: 80px; display: flex; align-items: center; justify-content: center; }
.zoom-btn + .zoom-btn { border-top: 2px solid #e6e6e6; }
.logo { position: absolute; left: 13px; bottom: 3px; font: 600 39px/46px Inter, sans-serif; letter-spacing: -2.200px; text-shadow: 0 0 3px #fff, 0 0 3px #fff, 0 0 4px #fff; }
.b { color: #4f86ec; } .r { color: #db5040; } .y { color: #f3bd41; } .g { color: #57a55c; }
.legal { position: absolute; right: 0; bottom: 0; height: 28px; display: flex; gap: 23px; padding: 0 12px 0 11px; background: rgba(245, 245, 245, .72); color: #444; font: 20px/26px Roboto, sans-serif; white-space: nowrap; text-shadow: 6px 6px 8px #7ec3c4; }

.popup { position: absolute; left: 638px; top: 120px; width: 1296px; height: 828px; border-radius: 16px; background: #fff; padding: 24px; display: flex; box-shadow: 0 4px 14px rgba(0, 0, 0, .5); }
.popup::after { content: ""; position: absolute; left: 627px; top: 828px; border: 21px solid transparent; border-top-color: #fff; border-bottom: 0; }
.popup-body { flex: none; width: 1236px; height: 780px; background: #000; color: #fff; display: flex; flex-direction: column; align-items: center; text-shadow: 6px 8px 12px #d22; }
.popup-name { height: 127px; font: 900 84px/110px Lato, sans-serif; transform: scaleX(.79); }
.popup-subject { height: 100px; font: 48px/96px "DejaVu Serif", serif; -webkit-text-stroke: .8px #fff; }
.popup-text { margin-top: 35px; height: 263px; display: flex; flex-direction: column; align-items: center; font: 48px/50px "DejaVu Serif", serif; letter-spacing: 1.4px; white-space: nowrap; -webkit-text-stroke: .8px #fff; }
.popup-side { flex: none; width: 36px; margin-top: 3px; display: flex; flex-direction: column; align-items: center; gap: 11px; }
.popup-side { margin-top: -14px; }
.scrollbar { flex: none; width: 12px; height: 726px; border-radius: 6px; background: #e0e0e0; }

.card { flex: none; margin-top: 56px; width: 2220px; height: 900px; border: 2px solid #dcdee2; border-radius: 60px; background: #fff; overflow: hidden; }
.card-title { height: 175px; border-bottom: 2px solid #d9dadb; background: #f7f7f7; text-align: center; font: 900 84px/156px Lato, sans-serif; }
.card-title span { display: inline-block; transform: scaleX(.87) skewX(-3deg); }
.card-body { padding: 0 40px; display: flex; flex-direction: column; }
.label { height: 131px; padding-left: 3px; font: italic 54px/156px Lato, sans-serif; }
.label span { display: inline-block; transform: scaleX(.87); transform-origin: 0 50%; }
.field { height: 76px; border: 2px solid #ced4da; border-radius: 8px; padding: 0 24px 8px; font: 30px "DejaVu Serif", serif; background: #fff; resize: none; }
.field + .label { height: 124px; line-height: 142px; }
.field::placeholder { color: #868e96; opacity: 1; -webkit-text-stroke: .5px #868e96; }
.field-post { height: 200px; padding-top: 16px; font: 32px/38px "Liberation Sans", sans-serif; }
.field-post::placeholder { -webkit-text-stroke: 0; }
```
FILE: particles.js
```js
// Linked-particle background: two particles closer than REACH share a line
// that fades out with distance.
const REACH = 300, ALPHA = 0.5;
const nodes = [
  [46,62],[178,79],[150,178],[381,112],[544,14],[577,14],[546,63],[591,250],[331,401],[391,394],[260,566],[382,559],[478,590],[512,707],
  [586,758],[582,804],[606,814],[36,733],[177,752],[165,757],[321,817],[336,884],[18,823],[14,955],[159,1049],[130,1075],[115,1084],[287,1066],
  [297,1185],[389,1271],[418,1323],[241,1331],[277,1378],[260,1410],[34,1392],[60,1498],[332,1507],[448,1523],[464,1474],[537,1208],
  [646,1130],[669,1214],[680,1222],[692,1251],[315,1777],[486,1831],[475,1924],[408,1975],[321,2033],[278,2064],[105,1975],[665,1878],
  [607,2035],[789,2058],[323,2221],[450,2238],[572,2218],[612,2236],[868,770],[890,1350],[886,1470],[830,1705],[900,1921],[860,2113],
  [1515,88],[1589,51],[2070,86],[2445,23],[1843,237],[1960,300],[2312,205],[2625,253],
  [3055,103],[3074,161],[3333,276],[3346,352],[3420,360],[3532,265],[3599,172],[3663,175],[3674,170],[3711,358],[3701,513],[3612,559],
  [3798,662],[3602,703],[3471,754],[3588,784],[3332,639],[3203,887],[3390,943],[3449,958],[3660,966],[3707,1046],[3213,1053],
  [3035,479],[3024,511],[3011,546],[3031,597],[2940,605],[2960,636],[2850,370],
  [3075,1282],[3068,1320],[3075,1445],[3178,1639],[3123,1822],[3401,1757],[3577,1748],[3630,1803],[3579,1821],[3493,1871],[3532,1869],
  [3720,1910],[3650,1945],[3588,2014],[3493,2069],[3423,2074],[3252,2163],[3161,2193],[3625,2211],[3782,2138],[3810,2195],
  [2970,1320],[2900,1220],[2860,1395],[2960,2076],[2850,1790]
];
// Stray lines between particles hidden by the map and the card: x1, y1, x2, y2, alpha.
const strays = [
  [1369,1438,1360,1494,.2],[1396,1438,1391,1494,.2],[1580,1438,1582,1494,.35],[1584,1438,1585,1494,.15],[1500,1438,1540,1494,.1],
  [1890,1438,1898,1494,.2],[1921,1438,1923,1494,.15],[1922,1438,1888,1460,.3],[1888,1460,1900,1438,.2],[2150,1438,2218,1494,.1],[2270,1438,2256,1494,.2],[2345,1438,2342,1494,.2]
];
const NS = "http://www.w3.org/2000/svg";
const svg = document.getElementById("particles");
function add(tag, attrs) {
  const el = document.createElementNS(NS, tag);
  for (const key in attrs) el.setAttribute(key, attrs[key]);
  svg.appendChild(el);
}
function line(x1, y1, x2, y2, alpha) {
  add("line", { x1, y1, x2, y2, stroke: "#fff", "stroke-width": 2, "stroke-opacity": alpha.toFixed(3) });
}
nodes.forEach(([x, y], i) => {
  add("circle", { cx: x, cy: y, r: 3 + i % 3, fill: "#2c5f70", "fill-opacity": (0.15 + (i % 4) * 0.12).toFixed(2) });
  for (let j = i + 1; j < nodes.length; j++) {
    const [u, v] = nodes[j];
    const d = Math.hypot(x - u, y - v);
    if (d < REACH) line(x, y, u, v, ALPHA * (1 - d / REACH));
  }
});
strays.forEach(s => line(...s));
```
